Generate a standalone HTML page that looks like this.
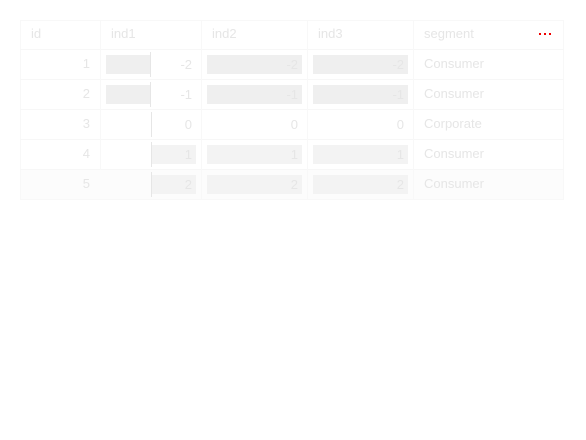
<!DOCTYPE html>
<html><head><style>
body{margin:0;width:586px;height:440px;background:#fff;font-family:"Liberation Sans",sans-serif;font-size:13px;color:#e6e6e6;position:relative;overflow:hidden}
div{position:absolute;box-sizing:border-box}
.t{line-height:16px}
.r{text-align:right}
.hl{height:1px;background:#f7f7f7;left:20px;width:544px}
.vl{width:1px;background:#f8f8f8;top:20px;height:150px}
.bn{background:#efefef;height:19px}
.bp{background:#f3f3f3;height:19px}
.ax{width:1px;background:#e6e6e6;height:25px;left:150px}
</style></head><body>
<div style="left:20px;top:169px;width:544px;height:31px;background:#fcfcfc"></div>
<div style="left:20px;top:20px;width:544px;height:180px;border:1px solid #f8f8f8"></div>
<div class="hl" style="top:49px"></div><div class="hl" style="top:79px"></div><div class="hl" style="top:109px"></div><div class="hl" style="top:139px"></div><div class="hl" style="top:169px"></div>
<div class="vl" style="left:100px"></div><div class="vl" style="left:201px;height:180px"></div><div class="vl" style="left:307px;height:180px"></div><div class="vl" style="left:413px;height:180px"></div>
<div class="t" style="left:31px;top:26px">id</div>
<div class="t" style="left:111px;top:26px">ind1</div>
<div class="t" style="left:212px;top:26px">ind2</div>
<div class="t" style="left:318px;top:26px">ind3</div>
<div class="t" style="left:424px;top:26px">segment</div>
<div style="left:539px;top:33px;width:2px;height:2px;background:#e00"></div>
<div style="left:544px;top:33px;width:2px;height:2px;background:#e00"></div>
<div style="left:549px;top:33px;width:2px;height:2px;background:#e00"></div>
<div class="bn" style="left:106px;top:55px;width:44px"></div>
<div class="bn" style="left:106px;top:85px;width:44px"></div>
<div class="bp" style="left:151px;top:145px;width:45px"></div>
<div class="bp" style="left:151px;top:175px;width:45px"></div>
<div class="ax" style="top:52px"></div><div class="ax" style="top:82px"></div><div class="ax" style="top:112px;left:151px"></div><div class="ax" style="top:142px;left:151px"></div><div class="ax" style="top:172px;left:151px"></div>
<div class="bn" style="left:207px;top:55px;width:95px"></div>
<div class="bn" style="left:207px;top:85px;width:95px"></div>
<div class="bp" style="left:207px;top:145px;width:95px"></div>
<div class="bp" style="left:207px;top:175px;width:95px"></div>
<div class="bn" style="left:313px;top:55px;width:95px"></div>
<div class="bn" style="left:313px;top:85px;width:95px"></div>
<div class="bp" style="left:313px;top:145px;width:95px"></div>
<div class="bp" style="left:313px;top:175px;width:95px"></div>
<div class="t r" style="left:40px;width:50px;top:56px">1</div>
<div class="t r" style="left:40px;width:50px;top:86px">2</div>
<div class="t r" style="left:40px;width:50px;top:116px">3</div>
<div class="t r" style="left:40px;width:50px;top:146px">4</div>
<div class="t r" style="left:40px;width:50px;top:176px">5</div>
<div class="t r" style="left:140px;width:52px;top:57px">-2</div>
<div class="t r" style="left:140px;width:52px;top:87px">-1</div>
<div class="t r" style="left:140px;width:52px;top:117px">0</div>
<div class="t r" style="left:140px;width:52px;top:147px">1</div>
<div class="t r" style="left:140px;width:52px;top:177px">2</div>
<div class="t r" style="left:240px;width:58px;top:57px">-2</div>
<div class="t r" style="left:240px;width:58px;top:87px">-1</div>
<div class="t r" style="left:240px;width:58px;top:117px">0</div>
<div class="t r" style="left:240px;width:58px;top:147px">1</div>
<div class="t r" style="left:240px;width:58px;top:177px">2</div>
<div class="t r" style="left:346px;width:58px;top:57px">-2</div>
<div class="t r" style="left:346px;width:58px;top:87px">-1</div>
<div class="t r" style="left:346px;width:58px;top:117px">0</div>
<div class="t r" style="left:346px;width:58px;top:147px">1</div>
<div class="t r" style="left:346px;width:58px;top:177px">2</div>
<div class="t" style="left:424px;top:56px">Consumer</div>
<div class="t" style="left:424px;top:86px">Consumer</div>
<div class="t" style="left:424px;top:116px">Corporate</div>
<div class="t" style="left:424px;top:146px">Consumer</div>
<div class="t" style="left:424px;top:176px">Consumer</div>
</body></html>
